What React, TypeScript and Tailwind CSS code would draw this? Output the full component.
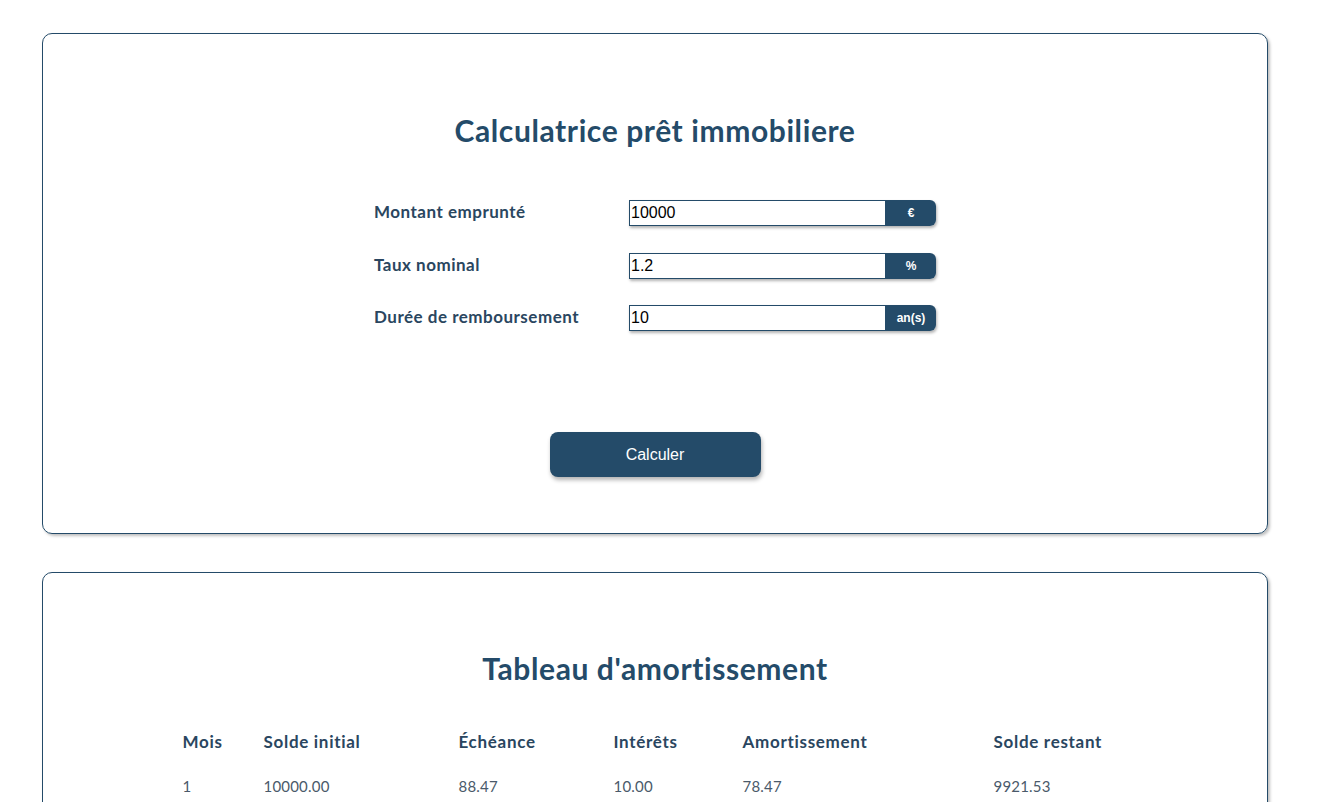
import React from "react";

const rows = [
  { label: "Montant emprunté", value: "10000", unit: "€" },
  { label: "Taux nominal", value: "1.2", unit: "%" },
  { label: "Durée de remboursement", value: "10", unit: "an(s)" },
];

const cols = [
  { h: "Mois", w: "w-[81px]" },
  { h: "Solde initial", w: "w-[195px]" },
  { h: "Échéance", w: "w-[155px]" },
  { h: "Intérêts", w: "w-[129px]" },
  { h: "Amortissement", w: "w-[251px]" },
  { h: "Solde restant", w: "w-[134px]" },
];
const data = ["1", "10000.00", "88.47", "10.00", "78.47", "9921.53"];

export default function App() {
  return (
    <div className="min-h-[802px] bg-white font-['Lato','Noto_Sans',sans-serif] text-[#244b69]">
      <div className="ml-[42px] w-[1226px] pt-[33px] flex flex-col gap-[38px]">
        <section className="rounded-[10px] border border-[#244b69] shadow-[2px_2px_3px_rgba(0,0,0,0.25)] pt-[76px] pb-[56px] flex flex-col items-center">
          <h1 className="h-[40px] flex items-center text-[30px] tracking-[0.6px] font-bold">Calculatrice prêt immobiliere</h1>
          <div className="mt-[50px] flex flex-col gap-[26.5px]">
            {rows.map((r) => (
              <div key={r.label} className="flex items-center h-[26px]">
                <label className="w-[255px] text-[17px] tracking-[0.5px] font-bold text-[#2a4660] -mt-[2px]">{r.label}</label>
                <div className="flex h-[26px] rounded-r-[6px] shadow-[1px_2px_3px_rgba(0,0,0,0.3)]">
                  <div className="w-[257px] h-[26px] border border-[#244b69] bg-white flex items-center px-[1px] font-['Liberation_Sans',Arial,sans-serif] text-[16px] text-black">
                    {r.value}
                  </div>
                  <div className="w-[50px] h-[26px] bg-[#244b69] rounded-r-[6px] flex items-center justify-center text-white font-bold text-[12px] font-['Liberation_Sans',Arial,sans-serif]">
                    {r.unit}
                  </div>
                </div>
              </div>
            ))}
          </div>
          <button className="mt-[101px] w-[211px] h-[45px] rounded-[8px] bg-[#244b69] text-white text-[16px] font-['Liberation_Sans',Arial,sans-serif] shadow-[1px_3px_4px_rgba(0,0,0,0.3)]">
            Calculer
          </button>
        </section>
        <section className="rounded-[10px] border border-[#244b69] shadow-[2px_2px_3px_rgba(0,0,0,0.25)] pt-[75px] pb-[40px] flex flex-col items-center">
          <h2 className="h-[40px] flex items-center text-[30px] tracking-[0.6px] font-bold">Tableau d'amortissement</h2>
          <div className="mt-[39px] flex flex-col">
            <div className="flex h-[30px] items-center">
              {cols.map((c) => (
                <div key={c.h} className={`${c.w} text-[17px] tracking-[0.7px] font-bold text-[#2a4660]`}>{c.h}</div>
              ))}
            </div>
            <div className="flex h-[30px] items-center mt-[14px]">
              {data.map((d, i) => (
                <div key={i} className={`${cols[i].w} text-[15px] tracking-[0.2px] text-[#4a5a6a]`}>{d}</div>
              ))}
            </div>
          </div>
        </section>
      </div>
    </div>
  );
}
